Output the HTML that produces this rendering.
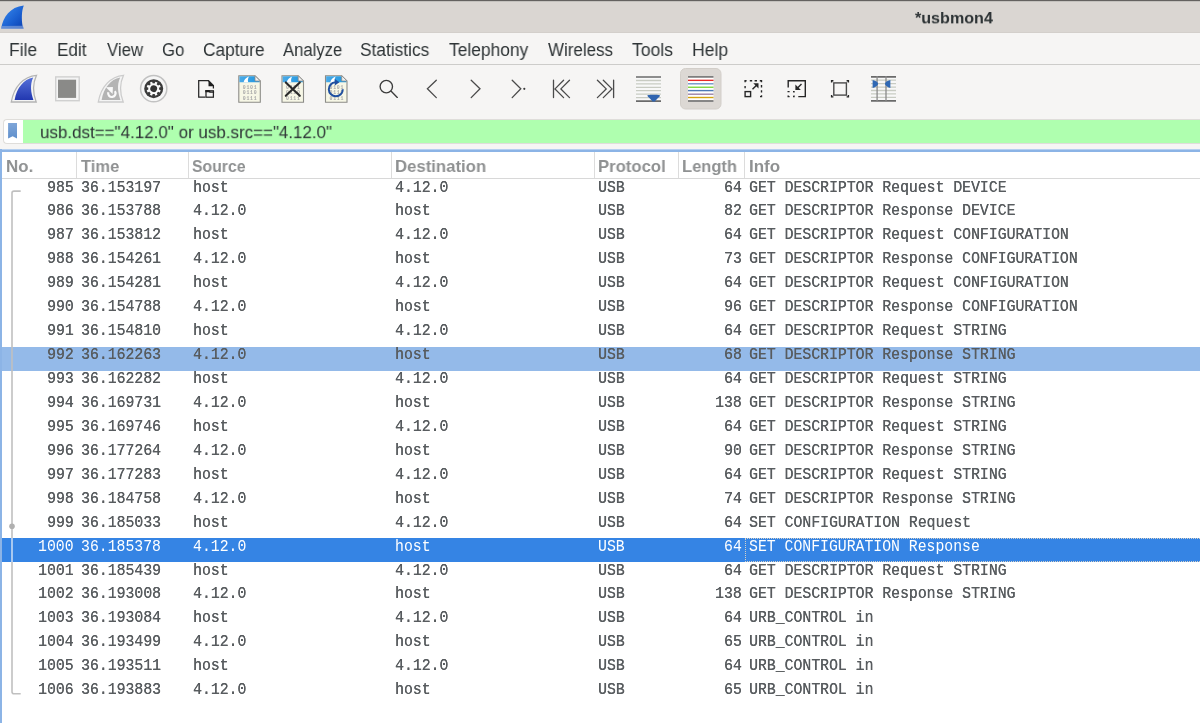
<!DOCTYPE html><html><head><meta charset="utf-8"><style>
*{margin:0;padding:0;box-sizing:border-box}
html,body{width:1200px;height:723px;overflow:hidden;background:#f6f5f4;position:relative;-webkit-font-smoothing:antialiased}
.a{will-change:transform}
.a{position:absolute}
.menu{font-family:"Liberation Sans",sans-serif;font-size:16px;color:#2e3436;line-height:1;white-space:pre}
.hdr{font-family:"Liberation Sans",sans-serif;font-weight:bold;font-size:15.5px;color:#8f8f8f;line-height:1;white-space:pre}
.m{font-family:"Liberation Mono",monospace;font-size:14.8px;color:#303030;line-height:1;white-space:pre;transform-origin:0 11.5px;transform:scaleY(1.08);text-shadow:0.22px 0 0 currentColor}
.r{text-align:right}
</style></head><body>
<div class="a" style="left:0;top:0;width:1200px;height:33px;background:#dad6d2"></div><div class="a" style="left:0;top:32px;width:1200px;height:1px;background:#d3cfcb"></div>
<div class="a" style="left:0;top:0;width:1200px;height:1px;background:#646260"></div>
<div class="a" style="left:0;top:1px;width:1200px;height:1px;background:#c4c2be"></div>
<div class="a" style="left:914.9px;top:10.65px;font-family:'Liberation Sans',sans-serif;font-weight:bold;font-size:16px;color:#2e3436;line-height:1;white-space:pre;transform-origin:0 0;transform:scale(1.0064,0.95);">*usbmon4</div>
<svg class="a" style="left:0;top:0" width="30" height="32" viewBox="0 0 30 32">
<defs><linearGradient id="fg" x1="0" y1="0" x2="1" y2="1"><stop offset="0" stop-color="#3b8df0"/><stop offset="0.6" stop-color="#1a5fd0"/><stop offset="1" stop-color="#0a3fb0"/></linearGradient></defs>
<path d="M1.2 28.5 C3 17 10 7 23.8 5.5 C21.5 11 21.5 19 22.5 25.5 L23.5 28.5 Z" fill="url(#fg)"/>
<path d="M1.2 26 L23 25.8 L23.8 28.8 L1 28.8 Z" fill="#7fa0d8" opacity="0.7"/>
</svg>
<div class="a" style="left:0;top:64px;width:1200px;height:1px;background:#cdccca"></div>
<div class="a" style="left:9.33px;top:41.0px;font-family:'Liberation Sans',sans-serif;font-size:18px;color:#2e3436;line-height:1;white-space:pre;transform-origin:0 0;transform:scale(0.9704,1.0);">File</div>
<div class="a" style="left:56.55px;top:41.0px;font-family:'Liberation Sans',sans-serif;font-size:18px;color:#2e3436;line-height:1;white-space:pre;transform-origin:0 0;transform:scale(0.95,1.0);">Edit</div>
<div class="a" style="left:106.7px;top:41.0px;font-family:'Liberation Sans',sans-serif;font-size:18px;color:#2e3436;line-height:1;white-space:pre;transform-origin:0 0;transform:scale(0.9308,1.0);">View</div>
<div class="a" style="left:161.57px;top:41.0px;font-family:'Liberation Sans',sans-serif;font-size:18px;color:#2e3436;line-height:1;white-space:pre;transform-origin:0 0;transform:scale(0.9318,1.0);">Go</div>
<div class="a" style="left:202.74px;top:41.0px;font-family:'Liberation Sans',sans-serif;font-size:18px;color:#2e3436;line-height:1;white-space:pre;transform-origin:0 0;transform:scale(0.9613,1.0);">Capture</div>
<div class="a" style="left:282.7px;top:41.0px;font-family:'Liberation Sans',sans-serif;font-size:18px;color:#2e3436;line-height:1;white-space:pre;transform-origin:0 0;transform:scale(0.9254,1.0);">Analyze</div>
<div class="a" style="left:359.54px;top:41.0px;font-family:'Liberation Sans',sans-serif;font-size:18px;color:#2e3436;line-height:1;white-space:pre;transform-origin:0 0;transform:scale(0.962,1.0);">Statistics</div>
<div class="a" style="left:448.75px;top:41.0px;font-family:'Liberation Sans',sans-serif;font-size:18px;color:#2e3436;line-height:1;white-space:pre;transform-origin:0 0;transform:scale(0.9665,1.0);">Telephony</div>
<div class="a" style="left:547.5px;top:41.0px;font-family:'Liberation Sans',sans-serif;font-size:18px;color:#2e3436;line-height:1;white-space:pre;transform-origin:0 0;transform:scale(0.942,1.0);">Wireless</div>
<div class="a" style="left:632.0px;top:41.0px;font-family:'Liberation Sans',sans-serif;font-size:18px;color:#2e3436;line-height:1;white-space:pre;transform-origin:0 0;transform:scale(0.9762,1.0);">Tools</div>
<div class="a" style="left:691.92px;top:41.0px;font-family:'Liberation Sans',sans-serif;font-size:18px;color:#2e3436;line-height:1;white-space:pre;transform-origin:0 0;transform:scale(0.9771,1.0);">Help</div>
<svg class="a" style="left:0;top:0" width="1200" height="118" viewBox="0 0 1200 118">
<defs>
<linearGradient id="bf" x1="0" y1="0" x2="0" y2="1"><stop offset="0" stop-color="#5570d8"/><stop offset="1" stop-color="#2238b0"/></linearGradient>
<linearGradient id="docb" x1="0" y1="0" x2="1" y2="0"><stop offset="0" stop-color="#4aaae8"/><stop offset="1" stop-color="#1e96e0"/></linearGradient>
</defs>
<!-- capture start fin -->
<path d="M11.3 102 L36.2 102 C33.5 95 31.5 86 36.5 75.3 C24 76.5 14 86 11.3 102 Z" fill="#f4f4f4" stroke="#b4b4b4" stroke-width="1.3"/>
<path d="M14.6 100 L33.4 100 C31 93 29.6 85 33.2 77.6 C23.5 79.5 16.8 88 14.6 100 Z" fill="url(#bf)"/>
<!-- stop -->
<rect x="55.7" y="76.9" width="23.5" height="23.8" fill="#f4f4f4" stroke="#d0d0d0" stroke-width="1.4"/>
<rect x="58" y="79.7" width="18.1" height="18.2" fill="#8a8a88"/>
<!-- restart fin (grey) -->
<path d="M98.3 102 L123.2 102 C120.5 95 118.5 86 123.5 75.3 C111 76.5 101 86 98.3 102 Z" fill="#f4f4f4" stroke="#cccccc" stroke-width="1.3"/>
<path d="M101.6 100 L120.4 100 C118 93 116.6 85 120.2 77.6 C110.5 79.5 103.8 88 101.6 100 Z" fill="#b4b4b4"/>
<path d="M108.3 92.2 A3.7 3.7 0 1 0 114.9 91.2" fill="none" stroke="#fafafa" stroke-width="2.2"/>
<path d="M105.9 87.3 L112.9 86.9 L112.6 93.9 Z" fill="#fafafa"/>
<!-- options gear -->
<circle cx="153.7" cy="88.65" r="13.1" fill="#f6f6f6" stroke="#c2c2c2" stroke-width="1.5"/>
<circle cx="153.7" cy="88.65" r="9.5" fill="#3a3a3a"/>
<g transform="translate(153.7 88.65) rotate(22.5)" fill="#fafafa">
<circle r="5.4"/>
<g><rect x="-1.15" y="-7.1" width="2.3" height="2.5"/><rect x="-1.15" y="4.6" width="2.3" height="2.5"/><rect x="-7.1" y="-1.15" width="2.5" height="2.3"/><rect x="4.6" y="-1.15" width="2.5" height="2.3"/></g>
<g transform="rotate(45)"><rect x="-1.15" y="-7.1" width="2.3" height="2.5"/><rect x="-1.15" y="4.6" width="2.3" height="2.5"/><rect x="-7.1" y="-1.15" width="2.5" height="2.3"/><rect x="4.6" y="-1.15" width="2.5" height="2.3"/></g>
<circle r="3.4" fill="#333"/>
</g>
<!-- open -->
<g fill="none" stroke="#262626" stroke-width="1.25">
<path d="M205.3 97.2 H198.7 V80.7 H208.5 L213.4 85.6 V88.5"/>
<rect x="206" y="90.8" width="7.4" height="6.4"/>
</g>
<path d="M208.5 80.7 L214.1 86.3 L208.5 86.3 Z" fill="#1e1e1e"/>
<path d="M205.3 90.1 H209.3 L210.6 91.5 H214.1 V92.8 H209.8 L208.6 92.2 H205.3 Z" fill="#1e1e1e"/>
<!-- doc icons -->
<g id="doc1">
<path d="M238.8 75.7 H255 L260.3 81 V102.2 H238.8 Z" fill="#f7f7e6" stroke="#8c8c88" stroke-width="1.1"/>
<path d="M239.4 76.3 H254.6 L259.7 81.4 V82.2 H239.4 Z" fill="url(#docb)"/>
<path d="M243.6 82.2 C244.3 79.6 246 77.4 249 76.5 C247.8 78.4 247.6 80.4 248.2 82.2 Z" fill="#ffffff"/>
<path d="M255 75.7 V81 H260.3 Z" fill="#f0f0f0" stroke="#8c8c88" stroke-width="0.8"/>
<g font-family="Liberation Mono" font-size="4.9" fill="#a8a8a8" font-weight="bold" letter-spacing="0.72"><text x="242.8" y="89">0101</text><text x="242.8" y="94.3">0110</text><text x="242.8" y="99.6">0111</text></g>
</g>
<g transform="translate(43.2 0)">
<path d="M238.8 75.7 H255 L260.3 81 V102.2 H238.8 Z" fill="#f7f7e6" stroke="#8c8c88" stroke-width="1.1"/>
<path d="M239.4 76.3 H254.6 L259.7 81.4 V82.2 H239.4 Z" fill="url(#docb)"/>
<path d="M243.6 82.2 C244.3 79.6 246 77.4 249 76.5 C247.8 78.4 247.6 80.4 248.2 82.2 Z" fill="#ffffff"/>
<path d="M255 75.7 V81 H260.3 Z" fill="#f0f0f0" stroke="#8c8c88" stroke-width="0.8"/>
<g font-family="Liberation Mono" font-size="4.9" fill="#a8a8a8" font-weight="bold" letter-spacing="0.72"><text x="242.8" y="89">0101</text><text x="242.8" y="94.3">0110</text><text x="242.8" y="99.6">0111</text></g>
</g>
<path d="M285.8 82.4 L299.8 95.8 M299.8 82.4 L285.8 95.8" stroke="#2a2a2a" stroke-width="2.1" stroke-linecap="round"/>
<g transform="translate(86.7 0)">
<path d="M238.8 75.7 H255 L260.3 81 V102.2 H238.8 Z" fill="#f7f7e6" stroke="#8c8c88" stroke-width="1.1"/>
<path d="M239.4 76.3 H254.6 L259.7 81.4 V82.2 H239.4 Z" fill="url(#docb)"/>
<path d="M243.6 82.2 C244.3 79.6 246 77.4 249 76.5 C247.8 78.4 247.6 80.4 248.2 82.2 Z" fill="#ffffff"/>
<path d="M255 75.7 V81 H260.3 Z" fill="#f0f0f0" stroke="#8c8c88" stroke-width="0.8"/>
<g font-family="Liberation Mono" font-size="4.9" fill="#a8a8a8" font-weight="bold" letter-spacing="0.72"><text x="242.8" y="89">0101</text><text x="242.8" y="94.3">0110</text><text x="242.8" y="99.6">0111</text></g>
</g>
<path d="M335.5 82.3 A7 7 0 1 0 342.8 89.3" fill="none" stroke="#1f4fa0" stroke-width="2"/>
<path d="M334.8 79 L339.5 82.3 L334.8 85.6 Z" fill="#1f4fa0"/>
<!-- search -->
<g fill="none" stroke="#3c3c3c" stroke-width="1.35" stroke-linecap="round">
<circle cx="386.3" cy="86.6" r="6.2"/>
<path d="M391.2 91.3 L397.3 97.4"/>
</g>
<!-- arrows -->
<g fill="none" stroke="#4a4a4a" stroke-width="1.3" stroke-linecap="round" stroke-linejoin="miter">
<path d="M436.3 80.2 L427.4 88.8 L436.3 97.6"/>
<path d="M471.2 80.2 L480 88.8 L471.2 97.6"/>
<path d="M512.2 80.2 L520.8 88.8 L512.2 97.6"/>
<path d="M553.5 80.2 V97.6 M563.6 80.2 L555 88.9 L563.6 97.6 M569.5 80.2 L560.9 88.9 L569.5 97.6"/>
<path d="M613.6 80.2 V97.6 M597.4 80.2 L606.2 88.9 L597.4 97.6 M603.3 80.2 L612 88.9 L603.3 97.6"/>
</g>
<circle cx="524.3" cy="88.8" r="1.1" fill="#3a3a3a"/>
<!-- autoscroll -->
<rect x="636" y="76" width="25" height="26" fill="#f8f8f8"/>
<g stroke-width="1.3">
<path d="M636 77 H661 M636 101.1 H661" stroke="#6a6a6a" stroke-width="1.6"/>
<path d="M636 80.5 H661 M636 83.9 H661 M636 87.3 H661 M636 90.6 H661 M636 94.2 H661 M636 97.6 H661" stroke="#c8cbc2"/>
</g>
<path d="M647.4 95.6 C647.4 94.6 660 94.6 660 95.6 C660 97 656.5 99 655 101.6 L652.4 101.6 C651 99 647.4 97 647.4 95.6 Z" fill="#3065b0"/>
<!-- colorize pressed -->
<rect x="680.5" y="68.5" width="40.5" height="40.5" rx="5" fill="#dcd8d4" stroke="#d2cec9" stroke-width="1"/>
<rect x="688" y="76.2" width="25.5" height="25.6" fill="#ffffff"/>
<g stroke-width="1.4">
<path d="M688 76.9 H713.5" stroke="#707070" stroke-width="1.6"/>
<path d="M688 80.35 H713.5" stroke="#e82828"/>
<path d="M688 83.8 H713.5" stroke="#6f94c8"/>
<path d="M688 87.25 H713.5" stroke="#80d63e"/>
<path d="M688 90.6 H713.5" stroke="#4c7ab8"/>
<path d="M688 94.2 H713.5" stroke="#9a80a6"/>
<path d="M688 97.5 H713.5" stroke="#d4a410"/>
<path d="M688 101 H713.5" stroke="#6a6a6a" stroke-width="1.6"/>
</g>
<!-- expand -->
<g stroke="#262626" stroke-width="1.4" fill="none">
<path d="M745.1 82.3 V80.8 H746.6 M749.8 80.8 H752.2 M754.6 80.8 H757 M759.8 80.8 H761.5 V82.3 M761.5 85 V87.5 M761.5 90.2 V92.6 M761.5 95.3 V96.6 H760 M745.1 86.1 V88.2"/>
<rect x="745.1" y="91.6" width="5.5" height="5"/>
<path d="M752.5 89.3 L757.6 84.2"/>
</g>
<path d="M753.3 83.3 H758.5 V88.5 Z" fill="#262626"/>
<!-- collapse -->
<g stroke="#262626" stroke-width="1.4" fill="none">
<path d="M788.2 87.4 V80.8 H805.3 V96.6 H798.3"/>
<path d="M788.2 92.2 V91.6 H789.6 M793 91.6 H794 V92.6 M794 95.6 V96.6 H793 M789.6 96.6 H788.2 V95.6"/>
<path d="M801.5 84 L796.5 89"/>
</g>
<path d="M795.4 84.6 V90.1 H800.9 Z" fill="#262626"/>
<!-- normal size -->
<g stroke="#262626" stroke-width="1.4" fill="none">
<path d="M831.6 82.4 V80.7 H833.4 M846.6 80.7 H848.4 V82.4 M848.4 95 V96.9 H846.6 M833.4 96.9 H831.6 V95"/>
</g>
<rect x="833.8" y="82.9" width="12.6" height="12.2" fill="none" stroke="#4a4a4a" stroke-width="1.4"/>
<!-- resize columns -->
<rect x="871" y="76" width="25" height="26" fill="#f8f8f8"/>
<path d="M871 80.2 H896 M871 83.6 H896 M871 87.1 H896 M871 90.5 H896 M871 93.9 H896 M871 97.3 H896" stroke="#c8cbc2" stroke-width="1.3"/>
<path d="M871 76.9 H896 M871 100.9 H896" stroke="#6a6a6a" stroke-width="1.6"/>
<path d="M877.1 76 V102 M886 76 V102" stroke="#8a8a8a" stroke-width="1.3"/>
<path d="M872.6 79.9 C876 80.5 878.1 82.3 878.1 83.8 C878.1 85.3 876 87.2 872.6 87.9 Z" fill="#2f68b4"/>
<path d="M890.4 79.9 C887 80.5 885 82.3 885 83.8 C885 85.3 887 87.2 890.4 87.9 Z" fill="#2f68b4"/>
</svg>

<div class="a" style="left:3px;top:119px;width:1197px;height:25px;background:#fff;border:1px solid #dfddda;border-right:none;border-radius:4px 0 0 4px"></div>
<div class="a" style="left:23px;top:120px;width:1177px;height:23px;background:#afffaf"></div>
<svg class="a" style="left:7px;top:122px" width="12" height="18" viewBox="0 0 12 18"><defs><linearGradient id="bm" x1="0" y1="0" x2="0" y2="1"><stop offset="0" stop-color="#7fa6d8"/><stop offset="1" stop-color="#5f8fcc"/></linearGradient></defs><path d="M1.1 1 H10 V16.6 L5.6 14.2 L1.1 16.6 Z" fill="url(#bm)"/></svg>
<div class="a" style="left:39.86px;top:123.51px;font-family:'Liberation Sans',sans-serif;font-size:18px;color:#2e3436;line-height:1;white-space:pre;transform-origin:0 0;transform:scale(0.943,0.9462);">usb.dst==&quot;4.12.0&quot; or usb.src==&quot;4.12.0&quot;</div>
<div class="a" style="left:0;top:149px;width:1200px;height:574px;background:#fff"></div>
<div class="a" style="left:0;top:149px;width:1200px;height:1px;background:#b4cff0"></div>
<div class="a" style="left:0;top:150px;width:1200px;height:2px;background:#8cb4e6"></div>
<div class="a" style="left:0;top:149px;width:2px;height:574px;background:#8cb4e6"></div>
<div class="a m r" style="right:1126.6px;top:180.5px;color:#585c5f">985</div>
<div class="a m" style="left:81px;top:180.5px;color:#585c5f">36.153197</div>
<div class="a m" style="left:192.5px;top:180.5px;color:#585c5f">host</div>
<div class="a m" style="left:395.3px;top:180.5px;color:#585c5f">4.12.0</div>
<div class="a m" style="left:598.2px;top:180.5px;color:#585c5f">USB</div>
<div class="a m r" style="right:458.29999999999995px;top:180.5px;color:#585c5f">64</div>
<div class="a m" style="left:748.8px;top:180.5px;color:#585c5f">GET DESCRIPTOR Request DEVICE</div>
<div class="a m r" style="right:1126.6px;top:204.44px;color:#585c5f">986</div>
<div class="a m" style="left:81px;top:204.44px;color:#585c5f">36.153788</div>
<div class="a m" style="left:192.5px;top:204.44px;color:#585c5f">4.12.0</div>
<div class="a m" style="left:395.3px;top:204.44px;color:#585c5f">host</div>
<div class="a m" style="left:598.2px;top:204.44px;color:#585c5f">USB</div>
<div class="a m r" style="right:458.29999999999995px;top:204.44px;color:#585c5f">82</div>
<div class="a m" style="left:748.8px;top:204.44px;color:#585c5f">GET DESCRIPTOR Response DEVICE</div>
<div class="a m r" style="right:1126.6px;top:228.38px;color:#585c5f">987</div>
<div class="a m" style="left:81px;top:228.38px;color:#585c5f">36.153812</div>
<div class="a m" style="left:192.5px;top:228.38px;color:#585c5f">host</div>
<div class="a m" style="left:395.3px;top:228.38px;color:#585c5f">4.12.0</div>
<div class="a m" style="left:598.2px;top:228.38px;color:#585c5f">USB</div>
<div class="a m r" style="right:458.29999999999995px;top:228.38px;color:#585c5f">64</div>
<div class="a m" style="left:748.8px;top:228.38px;color:#585c5f">GET DESCRIPTOR Request CONFIGURATION</div>
<div class="a m r" style="right:1126.6px;top:252.32px;color:#585c5f">988</div>
<div class="a m" style="left:81px;top:252.32px;color:#585c5f">36.154261</div>
<div class="a m" style="left:192.5px;top:252.32px;color:#585c5f">4.12.0</div>
<div class="a m" style="left:395.3px;top:252.32px;color:#585c5f">host</div>
<div class="a m" style="left:598.2px;top:252.32px;color:#585c5f">USB</div>
<div class="a m r" style="right:458.29999999999995px;top:252.32px;color:#585c5f">73</div>
<div class="a m" style="left:748.8px;top:252.32px;color:#585c5f">GET DESCRIPTOR Response CONFIGURATION</div>
<div class="a m r" style="right:1126.6px;top:276.26px;color:#585c5f">989</div>
<div class="a m" style="left:81px;top:276.26px;color:#585c5f">36.154281</div>
<div class="a m" style="left:192.5px;top:276.26px;color:#585c5f">host</div>
<div class="a m" style="left:395.3px;top:276.26px;color:#585c5f">4.12.0</div>
<div class="a m" style="left:598.2px;top:276.26px;color:#585c5f">USB</div>
<div class="a m r" style="right:458.29999999999995px;top:276.26px;color:#585c5f">64</div>
<div class="a m" style="left:748.8px;top:276.26px;color:#585c5f">GET DESCRIPTOR Request CONFIGURATION</div>
<div class="a m r" style="right:1126.6px;top:300.2px;color:#585c5f">990</div>
<div class="a m" style="left:81px;top:300.2px;color:#585c5f">36.154788</div>
<div class="a m" style="left:192.5px;top:300.2px;color:#585c5f">4.12.0</div>
<div class="a m" style="left:395.3px;top:300.2px;color:#585c5f">host</div>
<div class="a m" style="left:598.2px;top:300.2px;color:#585c5f">USB</div>
<div class="a m r" style="right:458.29999999999995px;top:300.2px;color:#585c5f">96</div>
<div class="a m" style="left:748.8px;top:300.2px;color:#585c5f">GET DESCRIPTOR Response CONFIGURATION</div>
<div class="a m r" style="right:1126.6px;top:324.14px;color:#585c5f">991</div>
<div class="a m" style="left:81px;top:324.14px;color:#585c5f">36.154810</div>
<div class="a m" style="left:192.5px;top:324.14px;color:#585c5f">host</div>
<div class="a m" style="left:395.3px;top:324.14px;color:#585c5f">4.12.0</div>
<div class="a m" style="left:598.2px;top:324.14px;color:#585c5f">USB</div>
<div class="a m r" style="right:458.29999999999995px;top:324.14px;color:#585c5f">64</div>
<div class="a m" style="left:748.8px;top:324.14px;color:#585c5f">GET DESCRIPTOR Request STRING</div>
<div class="a" style="left:2px;top:346.58000000000004px;width:1198px;height:23.94px;background:#94bae9"></div>
<div class="a m r" style="right:1126.6px;top:348.08000000000004px;color:#585c5f">992</div>
<div class="a m" style="left:81px;top:348.08000000000004px;color:#585c5f">36.162263</div>
<div class="a m" style="left:192.5px;top:348.08000000000004px;color:#585c5f">4.12.0</div>
<div class="a m" style="left:395.3px;top:348.08000000000004px;color:#585c5f">host</div>
<div class="a m" style="left:598.2px;top:348.08000000000004px;color:#585c5f">USB</div>
<div class="a m r" style="right:458.29999999999995px;top:348.08000000000004px;color:#585c5f">68</div>
<div class="a m" style="left:748.8px;top:348.08000000000004px;color:#585c5f">GET DESCRIPTOR Response STRING</div>
<div class="a m r" style="right:1126.6px;top:372.02px;color:#585c5f">993</div>
<div class="a m" style="left:81px;top:372.02px;color:#585c5f">36.162282</div>
<div class="a m" style="left:192.5px;top:372.02px;color:#585c5f">host</div>
<div class="a m" style="left:395.3px;top:372.02px;color:#585c5f">4.12.0</div>
<div class="a m" style="left:598.2px;top:372.02px;color:#585c5f">USB</div>
<div class="a m r" style="right:458.29999999999995px;top:372.02px;color:#585c5f">64</div>
<div class="a m" style="left:748.8px;top:372.02px;color:#585c5f">GET DESCRIPTOR Request STRING</div>
<div class="a m r" style="right:1126.6px;top:395.96000000000004px;color:#585c5f">994</div>
<div class="a m" style="left:81px;top:395.96000000000004px;color:#585c5f">36.169731</div>
<div class="a m" style="left:192.5px;top:395.96000000000004px;color:#585c5f">4.12.0</div>
<div class="a m" style="left:395.3px;top:395.96000000000004px;color:#585c5f">host</div>
<div class="a m" style="left:598.2px;top:395.96000000000004px;color:#585c5f">USB</div>
<div class="a m r" style="right:458.29999999999995px;top:395.96000000000004px;color:#585c5f">138</div>
<div class="a m" style="left:748.8px;top:395.96000000000004px;color:#585c5f">GET DESCRIPTOR Response STRING</div>
<div class="a m r" style="right:1126.6px;top:419.9px;color:#585c5f">995</div>
<div class="a m" style="left:81px;top:419.9px;color:#585c5f">36.169746</div>
<div class="a m" style="left:192.5px;top:419.9px;color:#585c5f">host</div>
<div class="a m" style="left:395.3px;top:419.9px;color:#585c5f">4.12.0</div>
<div class="a m" style="left:598.2px;top:419.9px;color:#585c5f">USB</div>
<div class="a m r" style="right:458.29999999999995px;top:419.9px;color:#585c5f">64</div>
<div class="a m" style="left:748.8px;top:419.9px;color:#585c5f">GET DESCRIPTOR Request STRING</div>
<div class="a m r" style="right:1126.6px;top:443.84000000000003px;color:#585c5f">996</div>
<div class="a m" style="left:81px;top:443.84000000000003px;color:#585c5f">36.177264</div>
<div class="a m" style="left:192.5px;top:443.84000000000003px;color:#585c5f">4.12.0</div>
<div class="a m" style="left:395.3px;top:443.84000000000003px;color:#585c5f">host</div>
<div class="a m" style="left:598.2px;top:443.84000000000003px;color:#585c5f">USB</div>
<div class="a m r" style="right:458.29999999999995px;top:443.84000000000003px;color:#585c5f">90</div>
<div class="a m" style="left:748.8px;top:443.84000000000003px;color:#585c5f">GET DESCRIPTOR Response STRING</div>
<div class="a m r" style="right:1126.6px;top:467.78000000000003px;color:#585c5f">997</div>
<div class="a m" style="left:81px;top:467.78000000000003px;color:#585c5f">36.177283</div>
<div class="a m" style="left:192.5px;top:467.78000000000003px;color:#585c5f">host</div>
<div class="a m" style="left:395.3px;top:467.78000000000003px;color:#585c5f">4.12.0</div>
<div class="a m" style="left:598.2px;top:467.78000000000003px;color:#585c5f">USB</div>
<div class="a m r" style="right:458.29999999999995px;top:467.78000000000003px;color:#585c5f">64</div>
<div class="a m" style="left:748.8px;top:467.78000000000003px;color:#585c5f">GET DESCRIPTOR Request STRING</div>
<div class="a m r" style="right:1126.6px;top:491.72px;color:#585c5f">998</div>
<div class="a m" style="left:81px;top:491.72px;color:#585c5f">36.184758</div>
<div class="a m" style="left:192.5px;top:491.72px;color:#585c5f">4.12.0</div>
<div class="a m" style="left:395.3px;top:491.72px;color:#585c5f">host</div>
<div class="a m" style="left:598.2px;top:491.72px;color:#585c5f">USB</div>
<div class="a m r" style="right:458.29999999999995px;top:491.72px;color:#585c5f">74</div>
<div class="a m" style="left:748.8px;top:491.72px;color:#585c5f">GET DESCRIPTOR Response STRING</div>
<div class="a m r" style="right:1126.6px;top:515.6600000000001px;color:#585c5f">999</div>
<div class="a m" style="left:81px;top:515.6600000000001px;color:#585c5f">36.185033</div>
<div class="a m" style="left:192.5px;top:515.6600000000001px;color:#585c5f">host</div>
<div class="a m" style="left:395.3px;top:515.6600000000001px;color:#585c5f">4.12.0</div>
<div class="a m" style="left:598.2px;top:515.6600000000001px;color:#585c5f">USB</div>
<div class="a m r" style="right:458.29999999999995px;top:515.6600000000001px;color:#585c5f">64</div>
<div class="a m" style="left:748.8px;top:515.6600000000001px;color:#585c5f">SET CONFIGURATION Request</div>
<div class="a" style="left:2px;top:538.1px;width:1198px;height:23.94px;background:#3584e4"></div>
<div class="a m r" style="right:1126.6px;top:539.6px;color:#ffffff;text-shadow:none">1000</div>
<div class="a m" style="left:81px;top:539.6px;color:#ffffff;text-shadow:none">36.185378</div>
<div class="a m" style="left:192.5px;top:539.6px;color:#ffffff;text-shadow:none">4.12.0</div>
<div class="a m" style="left:395.3px;top:539.6px;color:#ffffff;text-shadow:none">host</div>
<div class="a m" style="left:598.2px;top:539.6px;color:#ffffff;text-shadow:none">USB</div>
<div class="a m r" style="right:458.29999999999995px;top:539.6px;color:#ffffff;text-shadow:none">64</div>
<div class="a m" style="left:748.8px;top:539.6px;color:#ffffff;text-shadow:none">SET CONFIGURATION Response</div>
<div class="a" style="left:745px;top:538.1px;width:455px;height:23.94px;border:1px dotted #d6d2c8;border-right:none"></div>
<div class="a m r" style="right:1126.6px;top:563.54px;color:#585c5f">1001</div>
<div class="a m" style="left:81px;top:563.54px;color:#585c5f">36.185439</div>
<div class="a m" style="left:192.5px;top:563.54px;color:#585c5f">host</div>
<div class="a m" style="left:395.3px;top:563.54px;color:#585c5f">4.12.0</div>
<div class="a m" style="left:598.2px;top:563.54px;color:#585c5f">USB</div>
<div class="a m r" style="right:458.29999999999995px;top:563.54px;color:#585c5f">64</div>
<div class="a m" style="left:748.8px;top:563.54px;color:#585c5f">GET DESCRIPTOR Request STRING</div>
<div class="a m r" style="right:1126.6px;top:587.48px;color:#585c5f">1002</div>
<div class="a m" style="left:81px;top:587.48px;color:#585c5f">36.193008</div>
<div class="a m" style="left:192.5px;top:587.48px;color:#585c5f">4.12.0</div>
<div class="a m" style="left:395.3px;top:587.48px;color:#585c5f">host</div>
<div class="a m" style="left:598.2px;top:587.48px;color:#585c5f">USB</div>
<div class="a m r" style="right:458.29999999999995px;top:587.48px;color:#585c5f">138</div>
<div class="a m" style="left:748.8px;top:587.48px;color:#585c5f">GET DESCRIPTOR Response STRING</div>
<div class="a m r" style="right:1126.6px;top:611.4200000000001px;color:#585c5f">1003</div>
<div class="a m" style="left:81px;top:611.4200000000001px;color:#585c5f">36.193084</div>
<div class="a m" style="left:192.5px;top:611.4200000000001px;color:#585c5f">host</div>
<div class="a m" style="left:395.3px;top:611.4200000000001px;color:#585c5f">4.12.0</div>
<div class="a m" style="left:598.2px;top:611.4200000000001px;color:#585c5f">USB</div>
<div class="a m r" style="right:458.29999999999995px;top:611.4200000000001px;color:#585c5f">64</div>
<div class="a m" style="left:748.8px;top:611.4200000000001px;color:#585c5f">URB_CONTROL in</div>
<div class="a m r" style="right:1126.6px;top:635.36px;color:#585c5f">1004</div>
<div class="a m" style="left:81px;top:635.36px;color:#585c5f">36.193499</div>
<div class="a m" style="left:192.5px;top:635.36px;color:#585c5f">4.12.0</div>
<div class="a m" style="left:395.3px;top:635.36px;color:#585c5f">host</div>
<div class="a m" style="left:598.2px;top:635.36px;color:#585c5f">USB</div>
<div class="a m r" style="right:458.29999999999995px;top:635.36px;color:#585c5f">65</div>
<div class="a m" style="left:748.8px;top:635.36px;color:#585c5f">URB_CONTROL in</div>
<div class="a m r" style="right:1126.6px;top:659.3px;color:#585c5f">1005</div>
<div class="a m" style="left:81px;top:659.3px;color:#585c5f">36.193511</div>
<div class="a m" style="left:192.5px;top:659.3px;color:#585c5f">host</div>
<div class="a m" style="left:395.3px;top:659.3px;color:#585c5f">4.12.0</div>
<div class="a m" style="left:598.2px;top:659.3px;color:#585c5f">USB</div>
<div class="a m r" style="right:458.29999999999995px;top:659.3px;color:#585c5f">64</div>
<div class="a m" style="left:748.8px;top:659.3px;color:#585c5f">URB_CONTROL in</div>
<div class="a m r" style="right:1126.6px;top:683.24px;color:#585c5f">1006</div>
<div class="a m" style="left:81px;top:683.24px;color:#585c5f">36.193883</div>
<div class="a m" style="left:192.5px;top:683.24px;color:#585c5f">4.12.0</div>
<div class="a m" style="left:395.3px;top:683.24px;color:#585c5f">host</div>
<div class="a m" style="left:598.2px;top:683.24px;color:#585c5f">USB</div>
<div class="a m r" style="right:458.29999999999995px;top:683.24px;color:#585c5f">65</div>
<div class="a m" style="left:748.8px;top:683.24px;color:#585c5f">URB_CONTROL in</div>
<svg class="a" style="left:0;top:179px" width="30" height="530" viewBox="0 179 30 530">
<path d="M20.7 191.1 H14 Q12 191.1 12 193.1 V691.8 Q12 693.8 14 693.8 H20.7" fill="none" stroke="#c0c0c0" stroke-width="1.6"/>
<rect x="11" y="538" width="2" height="24" fill="#a8c8f0"/>
<circle cx="12" cy="526.2" r="2.8" fill="#b0b0b0"/>
</svg>

<div class="a" style="left:2px;top:152px;width:1198px;height:26px;background:#fff"></div>
<div class="a" style="left:2px;top:178px;width:1198px;height:1px;background:#d8d8d8"></div>
<div class="a" style="left:76px;top:152px;width:1px;height:26px;background:#dcdcdc"></div>
<div class="a" style="left:188px;top:152px;width:1px;height:26px;background:#dcdcdc"></div>
<div class="a" style="left:391px;top:152px;width:1px;height:26px;background:#dcdcdc"></div>
<div class="a" style="left:594px;top:152px;width:1px;height:26px;background:#dcdcdc"></div>
<div class="a" style="left:678px;top:152px;width:1px;height:26px;background:#dcdcdc"></div>
<div class="a" style="left:744px;top:152px;width:1px;height:26px;background:#dcdcdc"></div>
<div class="a" style="left:5.71px;top:157.71px;font-family:'Liberation Sans',sans-serif;font-weight:bold;font-size:17px;color:#8f9192;line-height:1;white-space:pre;transform-origin:0 0;transform:scale(0.9923,1.0208);">No.</div>
<div class="a" style="left:81.3px;top:157.71px;font-family:'Liberation Sans',sans-serif;font-weight:bold;font-size:17px;color:#8f9192;line-height:1;white-space:pre;transform-origin:0 0;transform:scale(0.9718,1.0208);">Time</div>
<div class="a" style="left:192.37px;top:157.71px;font-family:'Liberation Sans',sans-serif;font-weight:bold;font-size:17px;color:#8f9192;line-height:1;white-space:pre;transform-origin:0 0;transform:scale(0.9286,1.0208);">Source</div>
<div class="a" style="left:395.22px;top:157.71px;font-family:'Liberation Sans',sans-serif;font-weight:bold;font-size:17px;color:#8f9192;line-height:1;white-space:pre;transform-origin:0 0;transform:scale(0.9846,1.0208);">Destination</div>
<div class="a" style="left:598.22px;top:157.71px;font-family:'Liberation Sans',sans-serif;font-weight:bold;font-size:17px;color:#8f9192;line-height:1;white-space:pre;transform-origin:0 0;transform:scale(0.9821,1.0208);">Protocol</div>
<div class="a" style="left:682.33px;top:157.71px;font-family:'Liberation Sans',sans-serif;font-weight:bold;font-size:17px;color:#8f9192;line-height:1;white-space:pre;transform-origin:0 0;transform:scale(0.9709,1.0208);">Length</div>
<div class="a" style="left:748.75px;top:157.71px;font-family:'Liberation Sans',sans-serif;font-weight:bold;font-size:17px;color:#8f9192;line-height:1;white-space:pre;transform-origin:0 0;transform:scale(1.0,1.0208);">Info</div>
</body></html>
